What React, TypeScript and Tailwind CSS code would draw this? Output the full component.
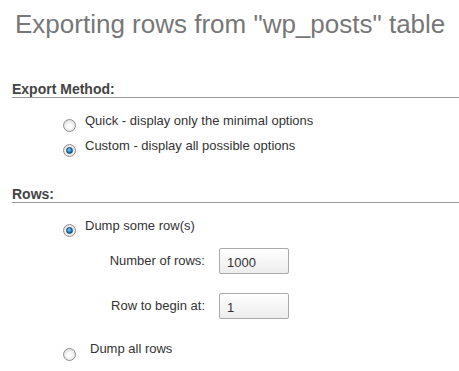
import React from "react";

function Radio({ checked, offset }: { checked?: boolean; offset: string }) {
  return (
    <span className={`relative block w-[13px] h-[13px] rounded-full border border-[#8f8f8f] bg-[radial-gradient(circle_at_50%_55%,#ffffff_20%,#d0d0d0_100%)] shrink-0 ${offset}`}>
      {checked && (
        <span className="absolute left-[2px] top-[2px] w-[7px] h-[7px] rounded-full border border-[#1c3f5e] bg-[radial-gradient(circle_at_40%_35%,#7fd0f6,#1a7fc0_55%,#0b4a7a)]" />
      )}
    </span>
  );
}

function Field({ label, value }: { label: string; value: string }) {
  return (
    <div className="flex items-center h-[26px]">
      <div className="w-[207px] text-right pr-[14px] text-[13px] leading-[16px] text-[#333]">{label}</div>
      <div className="w-[70px] h-[26px] rounded-[2px] border border-[#aaa] bg-gradient-to-b from-white to-[#ededed] flex items-center pl-[7px] pt-[3px] text-[13px] text-[#333]">
        {value}
      </div>
    </div>
  );
}

export default function App() {
  return (
    <div className="w-[459px] h-[371px] bg-white overflow-hidden" style={{ fontFamily: '"Liberation Sans", Arial, sans-serif' }}>
      <h1 className="pl-[15px] pt-[9px] text-[26px] leading-[30px] text-[#777]">Exporting rows from "wp_posts" table</h1>

      <div className="mt-[42px] ml-[12px]">
        <h2 className="text-[14px] font-bold text-[#444] leading-[16px] border-b border-[#999]">Export Method:</h2>
        <div className="pl-[51px] pt-[15px] flex flex-col gap-[9px] text-[13px] leading-[16px] text-[#333]">
          <label className="flex items-start gap-[9px] h-[16px]"><Radio offset="mt-[6px]" />Quick - display only the minimal options</label>
          <label className="flex items-start gap-[9px] h-[16px]"><Radio checked offset="mt-[6px]" />Custom - display all possible options</label>
        </div>
      </div>

      <div className="mt-[32px] ml-[12px]">
        <h2 className="text-[14px] font-bold text-[#444] leading-[16px] border-b border-[#999]">Rows:</h2>
        <div className="pt-[15px] text-[13px] leading-[16px] text-[#333]">
          <label className="pl-[51px] flex items-start gap-[9px] h-[16px]"><Radio checked offset="mt-[6px]" />Dump some row(s)</label>
          <div className="mt-[14px] flex flex-col gap-[19px]">
            <Field label="Number of rows:" value="1000" />
            <Field label="Row to begin at:" value="1" />
          </div>
          <label className="mt-[22px] pl-[51px] flex items-start gap-[14px] h-[16px]"><Radio offset="mt-[7px]" />Dump all rows</label>
        </div>
      </div>
    </div>
  );
}
